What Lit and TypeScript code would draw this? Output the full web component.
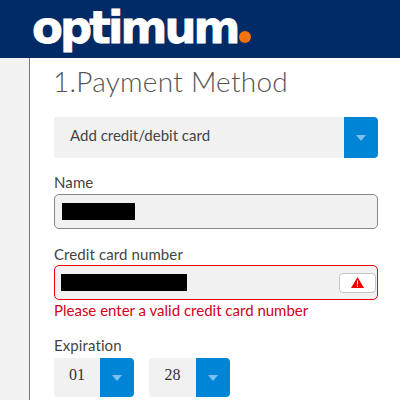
import { LitElement, html, css } from 'lit';
import { customElement } from 'lit/decorators.js';

const caret = html`<svg class="caret" width="10" height="6" viewBox="0 0 10 6"><path d="M0 0H10L5 6Z" fill="#7cc0f0"/></svg>`;

@customElement('app-root')
export class AppRoot extends LitElement {
  static styles = css`
    :host {
      display: block;
      width: 400px;
      height: 400px;
      overflow: hidden;
      background: #fff;
      font-family: Lato, 'Open Sans', sans-serif;
      color: #444;
    }
    .header {
      height: 58px;
      background: #002b66;
      display: flex;
      align-items: flex-start;
      padding-left: 32px;
    }
    .logo {
      font-family: 'DejaVu Sans', sans-serif;
      font-weight: 700;
      font-size: 45px;
      line-height: 56px;
      letter-spacing: -2.9px;
      -webkit-text-stroke: 0.8px #fff;
      color: #fff;
      display: flex;
      align-items: baseline;
    }
    .dot {
      width: 12px;
      height: 12px;
      border-radius: 50%;
      background: #f4720f;
      margin: 0 0 -1px 1px;
    }
    .body {
      display: flex;
      height: 342px;
    }
    .side {
      width: 29px;
      flex: none;
      background: #f2f2f2;
      border-right: 1px solid #777;
    }
    .main {
      margin-left: 24px;
      width: 324px;
      display: flex;
      flex-direction: column;
    }
    h1 {
      margin: 4px 0 0 -1px;
      font-size: 28px;
      line-height: 38px;
      font-weight: 300;
      color: #555;
      letter-spacing: 0.25px;
    }
    .select {
      display: flex;
      background: #f1f1f1;
      border-radius: 3px;
      overflow: hidden;
    }
    .wide {
      margin-top: 17px;
      height: 41px;
    }
    .select .value {
      flex: 1;
      display: flex;
      align-items: center;
      padding: 0 0 5px 16px;
      font-size: 15px;
      color: #444;
    }
    .arrow {
      width: 34px;
      flex: none;
      background: #0084d6;
      border-radius: 0 4px 4px 0;
      display: flex;
      align-items: center;
      justify-content: center;
    }
    .caret {
      display: block;
    }
    label {
      display: block;
      font-size: 15px;
      line-height: 18px;
      letter-spacing: 0.1px;
      color: #444;
    }
    .name-label {
      margin-top: 15px;
    }
    .input {
      box-sizing: border-box;
      background: #f1f1f1;
      border: 1px solid #888;
      border-radius: 5px;
      display: flex;
      align-items: center;
      justify-content: space-between;
      height: 35px;
    }
    .name-input {
      margin-top: 3px;
      padding-left: 7px;
    }
    .card-label {
      margin-top: 16px;
    }
    .card-input {
      margin-top: 2px;
      border-color: #e8000f;
      padding-left: 6px;
      padding-right: 1px;
    }
    .mask {
      background: #000;
      height: 17px;
    }
    .alert {
      width: 37px;
      height: 20px;
      box-sizing: border-box;
      background: #fff;
      border: 1px solid #c4c4c4;
      border-radius: 4px;
      display: flex;
      align-items: center;
      justify-content: center;
    }
    .error {
      margin-top: 1px;
      font-size: 15px;
      line-height: 18px;
      color: #d0021b;
    }
    .exp-label {
      margin-top: 17px;
    }
    .row {
      display: flex;
      gap: 15px;
      margin-top: 4px;
    }
    .small {
      width: 80px;
      height: 39px;
    }
    .small + .small {
      width: 81px;
    }
    .small .value {
      justify-content: center;
      padding: 0 0 6px;
      font-family: 'Liberation Serif', serif;
      font-size: 16px;
      color: #333;
    }
  `;

  render() {
    return html`
      <div class="header">
        <div class="logo">optimum<span class="dot"></span></div>
      </div>
      <div class="body">
        <div class="side"></div>
        <div class="main">
          <h1>1.Payment Method</h1>
          <div class="select wide">
            <div class="value">Add credit/debit card</div>
            <div class="arrow">${caret}</div>
          </div>
          <label class="name-label">Name</label>
          <div class="input name-input">
            <div class="mask" style="width:73px"></div>
          </div>
          <label class="card-label">Credit card number</label>
          <div class="input card-input">
            <div class="mask" style="width:126px"></div>
            <div class="alert">
              <svg width="13" height="11" viewBox="0 0 13 11">
                <path d="M6.5 0L13 11H0Z" fill="#f00000"/>
                <path d="M6 3.5H7V7.5H6ZM6 8.5H7V9.8H6Z" fill="#fff"/>
              </svg>
            </div>
          </div>
          <div class="error">Please enter a valid credit card number</div>
          <label class="exp-label">Expiration</label>
          <div class="row">
            <div class="select small">
              <div class="value">01</div>
              <div class="arrow">${caret}</div>
            </div>
            <div class="select small">
              <div class="value">28</div>
              <div class="arrow">${caret}</div>
            </div>
          </div>
        </div>
      </div>
    `;
  }
}
